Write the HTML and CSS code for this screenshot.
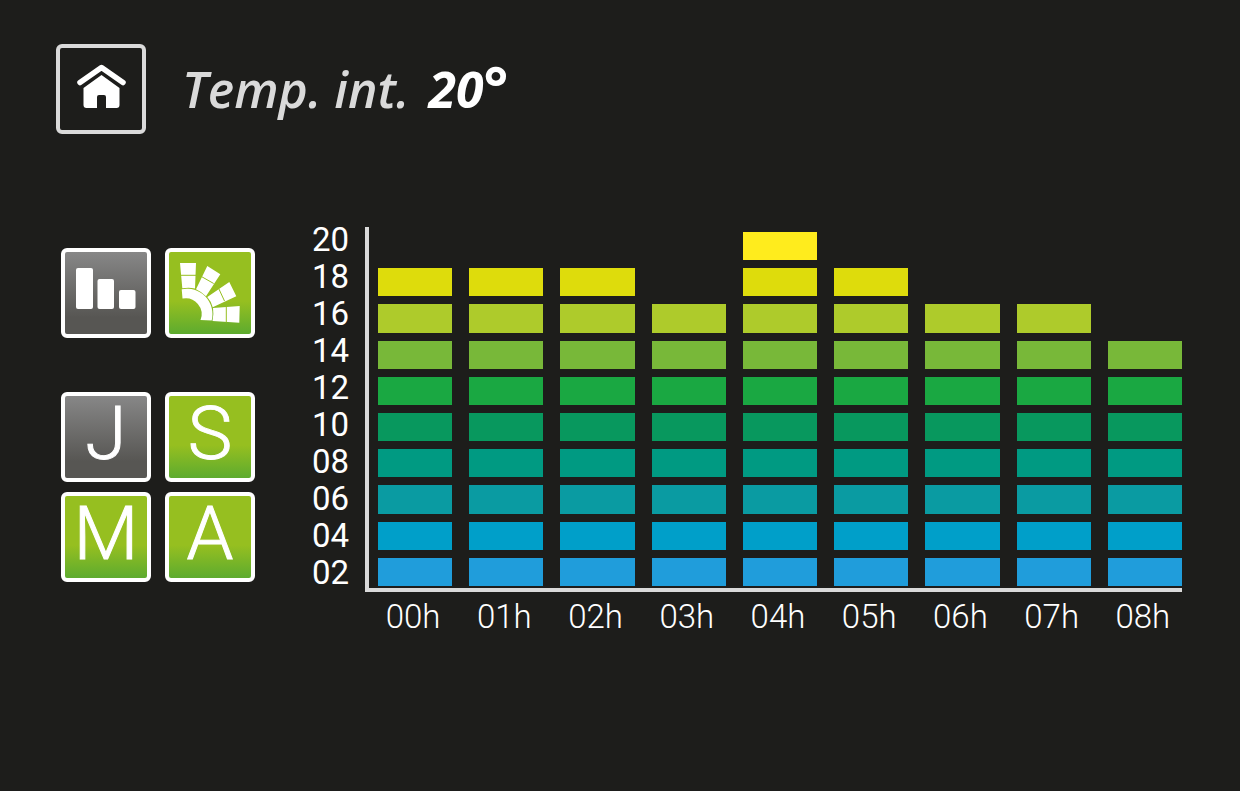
FILE: index.html
```html
<!DOCTYPE html>
<html lang="en">
<head>
<meta charset="utf-8">
<title>Temp. int.</title>
<link rel="stylesheet" href="styles.css">
</head>
<body>
<header class="top">
  <button class="tile tile-home" type="button" aria-label="Home">
    <svg viewBox="4 4 82 82" aria-hidden="true">
      <path d="M24 38.500L45.500 23.500L67 38.500" fill="none" stroke="#fff" stroke-width="5.500" stroke-linecap="round" stroke-linejoin="round"/>
      <path d="M45.500 31L63.500 44V61Q63.500 64 60.500 64H50V53Q50 51 48 51H43Q41 51 41 53V64H30.500Q27.500 64 27.500 61V44Z" fill="#fff"/>
    </svg>
  </button>
  <h1 class="title">Temp. int. <strong class="reading">20<span class="degree">°</span></strong></h1>
</header>
<main class="content">
  <nav class="tools">
    <div class="group">
      <button class="tile tile-grey" type="button" aria-label="Bars">
        <svg viewBox="4 4 82 82" fill="#fff" aria-hidden="true">
          <rect x="15" y="20" width="17" height="41" rx="2"/>
          <rect x="36.500" y="31" width="16.500" height="30" rx="2"/>
          <rect x="58" y="42" width="16.500" height="19" rx="2"/>
        </svg>
      </button>
      <button class="tile tile-green" type="button" aria-label="Colours">
        <svg viewBox="4 4 82 82" fill="#fff" aria-hidden="true">
          <path d="M15 15H31L30 40.500Q24 39 17.300 40.300Z"/>
          <path d="M42.300 18L55.300 26.300L41 48.300Q37 44 31 41.300Z"/>
          <path d="M64.300 34L71.300 48.300L47.700 59.300Q46 53 42.300 49Z"/>
          <path d="M74.700 58L74.300 74.700L47.500 73Q49 66 48 60Z"/>
          <path d="M16.700 41.300A25.500 25.500 0 0 1 46.700 72.500L35.500 72A16 16 0 0 0 17.500 50.500Z"/>
          <path d="M15 27.300H31M36.700 28.700L48.700 35.500M53.700 40.500L59.500 53M61.300 58V74.500" stroke="#96bf20" fill="none"/>
        </svg>
      </button>
    </div>
    <div class="group">
      <button class="tile tile-grey" type="button">J</button>
      <button class="tile tile-green" type="button">S</button>
      <button class="tile tile-green" type="button">M</button>
      <button class="tile tile-green" type="button">A</button>
    </div>
  </nav>
  <section class="chart" aria-label="Temperature by hour">
    <div class="y-labels">
      <span>20</span><span>18</span><span>16</span><span>14</span><span>12</span><span>10</span><span>08</span><span>06</span><span>04</span><span>02</span>
    </div>
    <div class="plot">
      <div class="column"><i class="c18"></i><i class="c16"></i><i class="c14"></i><i class="c12"></i><i class="c10"></i><i class="c08"></i><i class="c06"></i><i class="c04"></i><i class="c02"></i></div>
      <div class="column"><i class="c18"></i><i class="c16"></i><i class="c14"></i><i class="c12"></i><i class="c10"></i><i class="c08"></i><i class="c06"></i><i class="c04"></i><i class="c02"></i></div>
      <div class="column"><i class="c18"></i><i class="c16"></i><i class="c14"></i><i class="c12"></i><i class="c10"></i><i class="c08"></i><i class="c06"></i><i class="c04"></i><i class="c02"></i></div>
      <div class="column"><i class="c16"></i><i class="c14"></i><i class="c12"></i><i class="c10"></i><i class="c08"></i><i class="c06"></i><i class="c04"></i><i class="c02"></i></div>
      <div class="column"><i class="c20"></i><i class="c18"></i><i class="c16"></i><i class="c14"></i><i class="c12"></i><i class="c10"></i><i class="c08"></i><i class="c06"></i><i class="c04"></i><i class="c02"></i></div>
      <div class="column"><i class="c18"></i><i class="c16"></i><i class="c14"></i><i class="c12"></i><i class="c10"></i><i class="c08"></i><i class="c06"></i><i class="c04"></i><i class="c02"></i></div>
      <div class="column"><i class="c16"></i><i class="c14"></i><i class="c12"></i><i class="c10"></i><i class="c08"></i><i class="c06"></i><i class="c04"></i><i class="c02"></i></div>
      <div class="column"><i class="c16"></i><i class="c14"></i><i class="c12"></i><i class="c10"></i><i class="c08"></i><i class="c06"></i><i class="c04"></i><i class="c02"></i></div>
      <div class="column"><i class="c14"></i><i class="c12"></i><i class="c10"></i><i class="c08"></i><i class="c06"></i><i class="c04"></i><i class="c02"></i></div>
    </div>
    <div class="x-labels">
      <span>00h</span><span>01h</span><span>02h</span><span>03h</span><span>04h</span><span>05h</span><span>06h</span><span>07h</span><span>08h</span>
    </div>
  </section>
</main>
</body>
</html>
```
FILE: styles.css
```css
* {
  box-sizing: border-box;
}

body {
  margin: 0;
  padding: 44px 58px 44px 56px;
  background: #1d1d1b;
  color: #fff;
  font-family: Roboto, "Liberation Sans", sans-serif;
}

.top {
  display: flex;
  align-items: center;
  gap: 36px;
}

.title {
  margin: 0;
  color: #dadada;
  font: italic 600 50px/60px "Open Sans", "Noto Sans", sans-serif;
}

.reading {
  margin-left: 6px;
  color: #fff;
  font-weight: 700;
}

.degree {
  font-size: 58px;
  line-height: 1px;
}

.tile {
  display: flex;
  align-items: flex-start;
  justify-content: center;
  width: 90px;
  height: 90px;
  padding: 0;
  border: 4px solid #fff;
  border-radius: 6px;
  color: #fff;
  font: 300 75px/74px Roboto, "Liberation Sans", sans-serif;
  -webkit-text-stroke: 1px #fff;
}

.tile svg {
  width: 100%;
  height: 100%;
}

.tile-home {
  border-color: #dadada;
  background: none;
}

.tile-grey {
  background: linear-gradient(#878787, #575653 80%);
}

.tile-green {
  background: linear-gradient(#96bf20 60%, #5dab2f);
}

.content {
  display: flex;
  align-items: flex-start;
  gap: 57px;
  margin-top: 87px;
  padding-left: 5px;
}

.tools {
  display: grid;
  gap: 54px;
  padding-top: 27px;
}

.group {
  display: grid;
  grid-template-columns: auto auto;
  gap: 10px 14px;
}

.chart {
  flex: 1;
  display: grid;
  grid-template-columns: 53px 1fr;
}

.y-labels {
  display: grid;
  font-size: 33px;
  line-height: 37px;
}

.plot {
  display: grid;
  grid-template-columns: repeat(9, 1fr);
  gap: 17px;
  margin: 6px 0 -1px;
  padding: 5px 0 2px 9px;
  border-left: 4px solid #dadada;
  border-bottom: 4px solid #dadada;
}

.column {
  display: grid;
  grid-template-rows: repeat(10, 1fr);
  gap: 8px;
}

.c20 { grid-row: 1; background: #ffec1d; }
.c18 { grid-row: 2; background: #dedc0c; }
.c16 { grid-row: 3; background: #aecb2b; }
.c14 { grid-row: 4; background: #78b839; }
.c12 { grid-row: 5; background: #1aa842; }
.c10 { grid-row: 6; background: #08985e; }
.c08 { grid-row: 7; background: #009a82; }
.c06 { grid-row: 8; background: #0a9ba2; }
.c04 { grid-row: 9; background: #009fc9; }
.c02 { grid-row: 10; background: #209ddb; }

.x-labels {
  grid-column: 2;
  display: grid;
  grid-template-columns: repeat(9, 1fr);
  gap: 17px;
  padding: 6px 2px 0 11px;
  font-size: 33px;
  font-weight: 300;
  line-height: 40px;
  text-align: center;
}
```
